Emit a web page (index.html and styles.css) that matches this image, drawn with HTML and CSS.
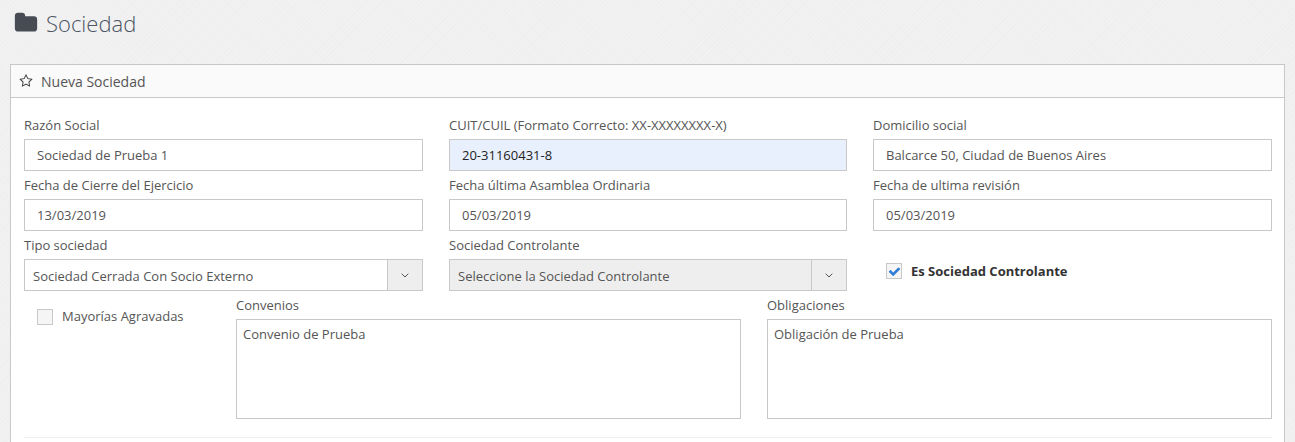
FILE: index.html
```html
<!DOCTYPE html>
<html lang="es">
<head>
    <meta charset="UTF-8">
    <meta name="viewport" content="width=device-width, initial-scale=1.0">
    <title>Sociedad</title>
    <link rel="stylesheet" href="styles.css">
</head>
<body>

    <h1 class="page-title">
        <svg class="folder-icon" viewBox="0 0 1792 1792"><path d="M1728 608v704q0 92-66 158t-158 66h-1216q-92 0-158-66t-66-158v-960q0-92 66-158t158-66h320q92 0 158 66t66 158v32h672q92 0 158 66t66 158z"/></svg>
        Sociedad
    </h1>

    <div class="panel">
        <div class="panel-heading">
            <svg class="star-icon" viewBox="0 0 1792 1792"><path d="M1201 1004l306-297-422-62-189-382-189 382-422 62 306 297-73 421 378-199 377 199zm527-357q0 22-26 48l-363 354 86 500q1 7 1 20 0 50-41 50-19 0-40-12l-449-236-449 236q-22 12-40 12-21 0-31.5-14.5t-10.5-35.5q0-6 2-20l86-500-364-354q-25-27-25-48 0-37 56-46l502-73 225-455q19-41 49-41t49 41l225 455 502 73q56 9 56 46z"/></svg>
            <span class="heading-text">Nueva Sociedad</span>
        </div>

        <div class="panel-body">
            <div class="form-grid">
                <div class="field">
                    <label for="razon">Razón Social</label>
                    <input type="text" id="razon" value="Sociedad de Prueba 1">
                </div>
                <div class="field">
                    <label for="cuit">CUIT/CUIL (Formato Correcto: XX-XXXXXXXX-X)</label>
                    <input type="text" id="cuit" class="autofilled" value="20-31160431-8">
                </div>
                <div class="field">
                    <label for="domicilio">Domicilio social</label>
                    <input type="text" id="domicilio" value="Balcarce 50, Ciudad de Buenos Aires">
                </div>

                <div class="field">
                    <label for="cierre">Fecha de Cierre del Ejercicio</label>
                    <input type="text" id="cierre" value="13/03/2019">
                </div>
                <div class="field">
                    <label for="asamblea">Fecha última Asamblea Ordinaria</label>
                    <input type="text" id="asamblea" value="05/03/2019">
                </div>
                <div class="field">
                    <label for="revision">Fecha de ultima revisión</label>
                    <input type="text" id="revision" value="05/03/2019">
                </div>

                <div class="field">
                    <label>Tipo sociedad</label>
                    <div class="select-box">
                        <span class="select-text">Sociedad Cerrada Con Socio Externo</span>
                        <span class="select-arrow"><svg viewBox="0 0 8 5"><path d="M.7.7L4 4 7.3.7"/></svg></span>
                    </div>
                </div>
                <div class="field">
                    <label>Sociedad Controlante</label>
                    <div class="select-box disabled">
                        <span class="select-text">Seleccione la Sociedad Controlante</span>
                        <span class="select-arrow"><svg viewBox="0 0 8 5"><path d="M.7.7L4 4 7.3.7"/></svg></span>
                    </div>
                </div>
                <div class="check-row controlante">
                    <span class="check-box"><svg viewBox="0 0 1792 1792"><path d="M1671 566q0 40-28 68l-724 724-136 136q-28 28-68 28t-68-28l-136-136-362-362q-28-28-28-68t28-68l136-136q28-28 68-28t68 28l294 295 656-657q28-28 68-28t68 28l136 136q28 28 28 68z"/></svg></span>
                    <strong>Es Sociedad Controlante</strong>
                </div>
            </div>

            <div class="notes-row">
                <div class="check-row mayorias">
                    <span class="check-box"></span>
                    <span>Mayorías Agravadas</span>
                </div>
                <div class="field">
                    <label for="convenios">Convenios</label>
                    <textarea id="convenios">Convenio de Prueba</textarea>
                </div>
                <div class="field">
                    <label for="obligaciones">Obligaciones</label>
                    <textarea id="obligaciones">Obligación de Prueba</textarea>
                </div>
            </div>

            <hr class="divider">
        </div>
    </div>

</body>
</html>
```

FILE: styles.css
```css
html, body {
    height: 442px;
    overflow: hidden;
}
body {
    margin: 0;
    padding: 0 10px;
    font-family: "Open Sans", Arial, sans-serif;
    font-size: 13px;
    line-height: 20px;
    color: #555;
    background-color: #f0f0f0;
    background-image:
        repeating-linear-gradient(45deg, rgba(255, 255, 255, 0.12) 0 1px, transparent 1px 3px),
        repeating-linear-gradient(-45deg, rgba(0, 0, 0, 0.008) 0 1px, transparent 1px 4px);
}
.page-title {
    display: flex;
    align-items: center;
    height: 46px;
    margin: 0 0 18px 0;
    padding-left: 4px;
    font-size: 22px;
    font-weight: 300;
    color: #4b5563;
}
.folder-icon {
    width: 24px;
    height: 24px;
    margin-right: 8px;
    fill: #464b54;
}
.panel {
    height: 378px;
    box-sizing: border-box;
    background-color: #fff;
    border: 1px solid #c8c8c8;
    border-bottom: none;
}
.panel-heading {
    display: flex;
    align-items: center;
    height: 32px;
    padding-left: 8px;
    background-color: #fafafa;
    border-bottom: 1px solid #c8c8c8;
    font-size: 14px;
    color: #555;
}
.heading-text {
    padding-top: 2px;
}
.star-icon {
    width: 14px;
    height: 14px;
    margin-right: 8px;
    fill: #444;
}
.panel-body {
    padding: 17px 12px 0 13px;
}
.form-grid {
    display: grid;
    grid-template-columns: 399px 398px 399px;
    column-gap: 26px;
    row-gap: 4px;
}
.field label {
    display: block;
    margin-bottom: 4px;
    color: #555;
}
input[type="text"] {
    display: block;
    width: 100%;
    height: 32px;
    padding: 0 12px;
    border: 1px solid #c8c8c8;
    background-color: #fff;
    box-sizing: border-box;
    font-family: inherit;
    font-size: 13px;
    color: #555;
}
input.autofilled {
    background-color: #e8f0fe;
    color: #222;
}
.select-box {
    display: flex;
    height: 32px;
    border: 1px solid #c8c8c8;
    box-sizing: border-box;
    background-color: #fff;
}
.select-box.disabled {
    background-color: #eee;
}
.select-text {
    flex: 1;
    padding-left: 8px;
    line-height: 33px;
}
.select-arrow {
    display: flex;
    align-items: center;
    justify-content: center;
    width: 34px;
    background-color: #eee;
    border-left: 1px solid #c8c8c8;
}
.select-arrow svg {
    width: 8px;
    height: 5px;
    fill: none;
    stroke: #555;
    stroke-width: 1;
}
.check-row {
    display: flex;
    align-items: center;
}
.check-box {
    display: flex;
    align-items: center;
    justify-content: center;
    width: 16px;
    height: 16px;
    margin-right: 9px;
    border: 1px solid #c8c8c8;
    background-color: #f5f5f5;
    box-sizing: border-box;
}
.check-box svg {
    width: 13px;
    height: 13px;
    fill: #2f7ed8;
}
.controlante {
    align-self: start;
    margin: 26px 0 0 13px;
}
.controlante strong {
    color: #333;
}
.notes-row {
    display: grid;
    grid-template-columns: 186px 505px 505px;
    column-gap: 26px;
    margin-top: 4px;
}
.mayorias {
    align-self: start;
    margin: 11px 0 0 13px;
}
.mayorias .check-box {
    margin-top: 2px;
}
textarea {
    display: block;
    width: 100%;
    height: 100px;
    padding: 4px 6px;
    border: 1px solid #c8c8c8;
    box-sizing: border-box;
    font-family: inherit;
    font-size: 13px;
    line-height: 20px;
    color: #555;
    resize: none;
}
.divider {
    margin: 18px 0 0 0;
    border: none;
    border-top: 1px solid #eee;
}
```
